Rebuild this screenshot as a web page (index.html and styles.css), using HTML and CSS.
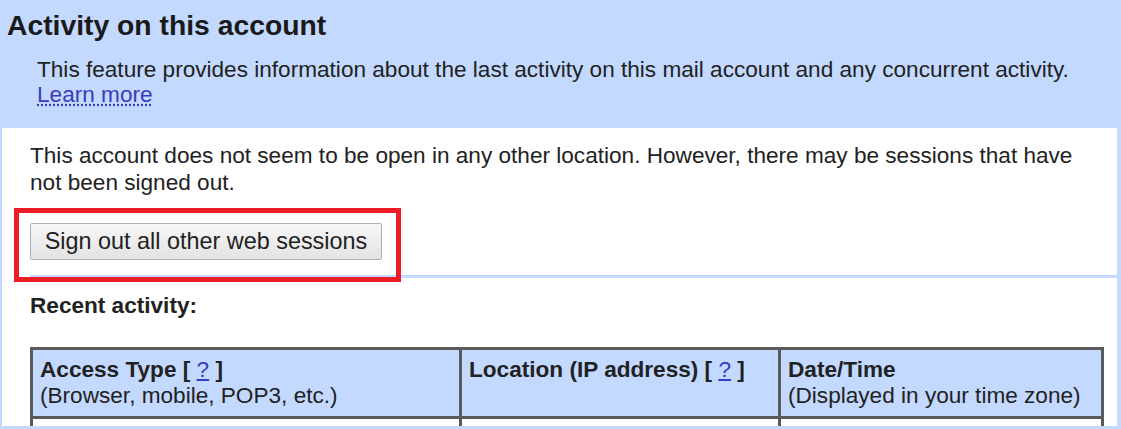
FILE: index.html
```html
<!DOCTYPE html>
<html>
<head>
<meta charset="utf-8">
<link rel="stylesheet" href="styles.css">
</head>
<body>
<div class="page">
  <div class="header">
    <h1 class="title">Activity on this account</h1>
    <p class="intro">This feature provides information about the last activity on this mail account and any concurrent activity.<br><a class="link" href="#">Learn more</a></p>
  </div>
  <div class="content">
    <p class="status">This account does not seem to be open in any other location. However, there may be sessions that have not been signed out.</p>
    <div class="signout">
      <button class="btn">Sign out all other web sessions</button>
      <div class="highlight"></div>
    </div>
    <p class="recent">Recent activity:</p>
    <table class="activity">
      <tr class="head">
        <td class="c1"><b>Access Type [ <a class="q" href="#">?</a> ]</b><br>(Browser, mobile, POP3, etc.)</td>
        <td class="c2"><b>Location (IP address) [ <a class="q" href="#">?</a> ]</b></td>
        <td class="c3"><b>Date/Time</b><br>(Displayed in your time zone)</td>
      </tr>
      <tr class="row">
        <td>&nbsp;</td><td>&nbsp;</td><td>&nbsp;</td>
      </tr>
    </table>
  </div>
</div>
</body>
</html>
```
FILE: styles.css
```css
html, body {
  margin: 0;
  padding: 0;
  background: #ffffff;
}
body {
  font-family: "Liberation Sans", Arial, sans-serif;
  color: #222222;
  overflow: hidden;
  height: 429px;
}
.page {
  width: 1121px;
  height: 429px;
  box-sizing: border-box;
  border-left: 2px solid #c3d9ff;
  border-right: 4px solid #c3d9ff;
  border-bottom: 3px solid #c3d9ff;
  overflow: hidden;
}
.header {
  background: #c3d9ff;
  height: 128px;
  margin-left: -2px;
  margin-right: -4px;
  padding: 8px 0 0 7px;
  box-sizing: border-box;
}
.title {
  margin: 0;
  font-size: 28.3px;
  font-weight: bold;
  color: #1a1a1a;
  line-height: 34px;
}
.intro {
  margin: 15px 0 0 30px;
  font-size: 22.6px;
  line-height: 25px;
}
.link {
  color: #3b3bbd;
  text-decoration: underline;
  text-decoration-style: dotted;
}
.content {
  padding: 14px 0 0 28px;
}
.status {
  margin: 0;
  font-size: 22.6px;
  line-height: 27px;
  width: 1050px;
}
.signout {
  position: relative;
  margin-top: 27px;
  padding-bottom: 15px;
  border-bottom: 3px solid #c3d9ff;
}
.btn {
  display: block;
  font-family: "Liberation Sans", Arial, sans-serif;
  font-size: 23.4px;
  color: #222222;
  height: 37px;
  width: 352px;
  padding: 0;
  border: 1px solid #b0b0b0;
  border-radius: 2px;
  background: linear-gradient(#f7f7f7, #e3e3e3);
}
.highlight {
  position: absolute;
  left: -16px;
  top: -15px;
  width: 387px;
  height: 74px;
  box-sizing: border-box;
  border: 5px solid #ee1c24;
}
.recent {
  margin: 15px 0 0 0;
  font-size: 22.6px;
  font-weight: bold;
  line-height: 25px;
}
.activity {
  margin: 29px 0 0 0;
  border-collapse: collapse;
  border: 3px solid #5a5a5a;
  font-size: 22.6px;
  line-height: 26px;
}
.activity td {
  border: 3px solid #5a5a5a;
  vertical-align: top;
  padding: 7px 7px 7px 7px;
}
.head td {
  background: #c3d9ff;
}
.c1 { width: 412px; }
.c2 { width: 302px; }
.c3 { width: 306px; }
.q {
  color: #3b3bbd;
  font-weight: normal;
  text-decoration: underline;
}
.row td {
  background: #ffffff;
  height: 30px;
}
```
